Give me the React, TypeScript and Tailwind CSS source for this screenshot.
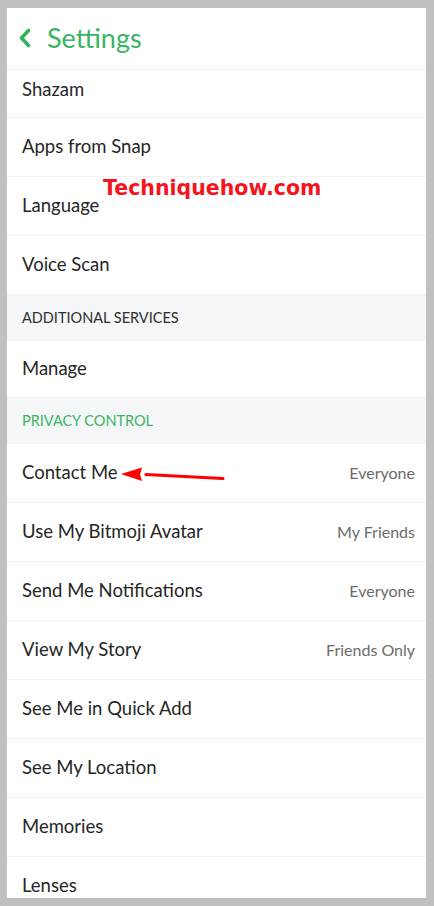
import { ReactNode } from "react";

const font = { fontFamily: "Lato, 'Open Sans', sans-serif" };

type Row = { label: string; value?: string; tall?: string };

const topRows: Row[] = [
  { label: "Apps from Snap" },
  { label: "Language" },
  { label: "Voice Scan" },
];

const privacyRows: Row[] = [
  { label: "Contact Me", value: "Everyone" },
  { label: "Use My Bitmoji Avatar", value: "My Friends" },
  { label: "Send Me Notifications", value: "Everyone" },
  { label: "View My Story", value: "Friends Only" },
  { label: "See Me in Quick Add" },
  { label: "See My Location" },
  { label: "Memories" },
  { label: "Lenses" },
];

function SettingRow({ label, value, tall }: Row) {
  return (
    <div
      className={`flex shrink-0 items-center justify-between border-b border-[#f2f2f2] pl-[15px] pr-[11px] ${
        tall ?? "h-[59px]"
      }`}
    >
      <span className="text-[18.5px] text-[#262626]">{label}</span>
      {value && <span className="text-[16px] text-[#6b6b6b]">{value}</span>}
    </div>
  );
}

function SectionHeader({ children, green }: { children: ReactNode; green?: boolean }) {
  return (
    <div
      className={`flex h-[46px] shrink-0 items-center bg-[#f5f6f8] pl-[15px] text-[14.5px] ${
        green ? "text-[#3ab463]" : "text-[#2e2e2e]"
      }`}
    >
      {children}
    </div>
  );
}

export default function App() {
  return (
    <div className="h-[906px] w-[434px] bg-[#c0c0c0] p-[8px] pl-[7px]" style={font}>
      <div className="relative flex h-[890px] flex-col overflow-hidden bg-white">
        <div className="flex h-[62px] shrink-0 items-center gap-[15px] border-b border-[#f0f0f0] pl-[11px]">
          <svg width="14" height="20" viewBox="0 0 14 20" className="mb-[1px]">
            <path d="M10.5 2.5 L3.5 10 L10.5 17.5" fill="none" stroke="#34b35c" strokeWidth="3.6" strokeLinecap="round" strokeLinejoin="round" />
          </svg>
          <span className="text-[27px] text-[#3ab463]">Settings</span>
        </div>

        <div className="flex h-[48px] shrink-0 items-center border-b border-[#f2f2f2] pb-[8px] pl-[15px]">
          <span className="text-[18.5px] text-[#262626]">Shazam</span>
        </div>
        {topRows.map((r) => (
          <SettingRow key={r.label} {...r} />
        ))}

        <SectionHeader>ADDITIONAL SERVICES</SectionHeader>
        <SettingRow label="Manage" tall="h-[57px]" />
        <SectionHeader green>PRIVACY CONTROL</SectionHeader>
        {privacyRows.map((r) => (
          <SettingRow key={r.label} {...r} />
        ))}

        {/* watermark */}
        <span
          className="absolute left-[96px] top-[165px] text-[20.5px] font-bold text-[#f5141e]"
          style={{ fontFamily: "'DejaVu Sans', Verdana, sans-serif" }}
        >
          Techniquehow.com
        </span>

        {/* arrow */}
        <svg className="absolute left-[111px] top-[458px]" width="110" height="18" viewBox="0 0 110 18">
          <path d="M105 12.5 L28 8.5" stroke="#f00" strokeWidth="3.2" strokeLinecap="round" />
          <path d="M3 8 L24 1.5 L22 8.5 L24 15 Z" fill="#f00" />
        </svg>
      </div>
    </div>
  );
}
